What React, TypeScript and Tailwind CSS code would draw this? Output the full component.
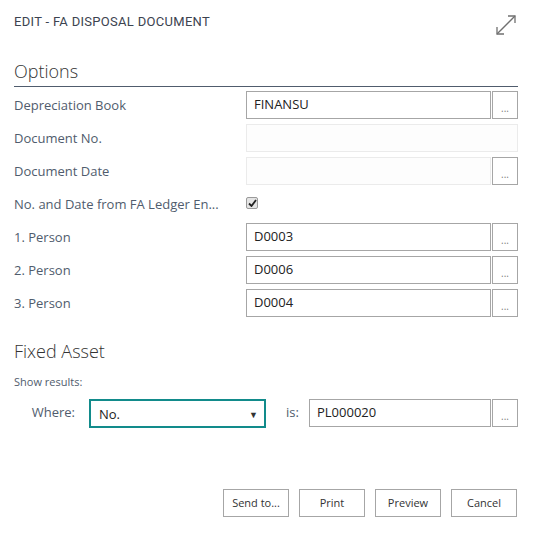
import React from "react";

const font = { fontFamily: '"Open Sans", "Noto Sans", sans-serif' };

function Dots() {
  return (
    <button className="ml-[1px] flex h-[28px] w-[26px] shrink-0 items-end justify-center border border-[#a6a6a6] bg-white pb-[5px] text-[10px] leading-[10px] text-[#808080]">
      ...
    </button>
  );
}

function Row({ label, value, button = true, disabled = false }: { label: string; value?: string; button?: boolean; disabled?: boolean }) {
  return (
    <div className="flex h-[28px] items-center">
      <div className="w-[232px] shrink-0 pt-[2px] text-[13px] text-[#505c6d]">{label}</div>
      <div className="flex flex-1">
        <div
          className={
            disabled
              ? "flex h-[28px] flex-1 items-center border border-[#ebebeb] bg-[#fdfdfd] px-[7px] text-[13px] text-[#222]"
              : "flex h-[28px] flex-1 items-center border border-[#a6a6a6] bg-white px-[7px] text-[13px] text-[#222]"
          }
        >
          {value}
        </div>
        {button && <Dots />}
      </div>
    </div>
  );
}

export default function App() {
  return (
    <div className="relative h-[534px] w-[533px] bg-white pl-[14px] pr-[15px]" style={font}>
      <div className="flex items-start justify-between pt-[13px]">
        <div
          className="text-[13px] font-normal uppercase leading-[17px] tracking-[0.3px] text-[#3c4350]"
          style={{ fontFamily: 'Roboto, "Liberation Sans", sans-serif' }}
        >
          EDIT - FA DISPOSAL DOCUMENT
        </div>
        <svg width="22" height="22" viewBox="0 0 22 22" className="mr-[1px] mt-[1px]" fill="none" stroke="#707070" strokeWidth="1.3">
          <line x1="2" y1="20" x2="20" y2="2" />
          <polyline points="13,2 20,2 20,9" />
          <polyline points="2,13 2,20 9,20" />
        </svg>
      </div>

      <div className="mt-[22px] border-b border-[#505c6d] pb-[2px] text-[18px] font-light leading-[26px] text-[#333]">
        Options
      </div>

      <div className="mt-[4px] flex flex-col gap-[5px]">
        <Row label="Depreciation Book" value="FINANSU" />
        <Row label="Document No." button={false} disabled />
        <Row label="Document Date" disabled />
        <div className="flex h-[28px] items-center">
          <div className="w-[232px] shrink-0 pt-[2px] text-[13px] text-[#505c6d]">No. and Date from FA Ledger En...</div>
          <div className="-mt-[3px] flex h-[12px] w-[12px] items-center justify-center rounded-[2px] border border-[#9a9a9a] bg-[#e4e4e4]">
            <svg width="9" height="8" viewBox="0 0 9 8" fill="none" stroke="#222" strokeWidth="1.8">
              <polyline points="1,4.5 3.5,7 8,1" />
            </svg>
          </div>
        </div>
        <Row label="1. Person" value="D0003" />
        <Row label="2. Person" value="D0006" />
        <Row label="3. Person" value="D0004" />
      </div>

      <div className="mt-[21px] text-[18px] font-light leading-[26px] text-[#333]">Fixed Asset</div>
      <div className="mt-[10px] text-[11px] leading-[16px] text-[#505c6d]">Show results:</div>

      <div className="mt-[9px] flex h-[28px] items-center">
        <div className="w-[61px] shrink-0 text-right text-[13px] text-[#505c6d]">Where:</div>
        <div className="ml-[14px] flex h-[29px] w-[177px] items-center justify-between border-2 border-[#128b8b] pl-[8px] pr-[6px] pt-[3px] text-[13px] text-[#222]">
          <span>No.</span>
          <span className="text-[9px] text-[#333]">▼</span>
        </div>
        <div className="ml-[20px] w-[23px] shrink-0 text-[13px] text-[#505c6d]">is:</div>
        <div className="flex flex-1">
          <div className="flex h-[28px] flex-1 items-center border border-[#a6a6a6] bg-white px-[7px] text-[13px] text-[#222]">
            PL000020
          </div>
          <Dots />
        </div>
      </div>

      <div className="mt-[62px] flex justify-end gap-[10px] pr-[1px]">
        {["Send to...", "Print", "Preview", "Cancel"].map((b) => (
          <button
            key={b}
            className="flex h-[28px] w-[66px] items-center justify-center border border-[#a6a6a6] bg-white text-[11px] text-[#333]"
          >
            {b}
          </button>
        ))}
      </div>
    </div>
  );
}
